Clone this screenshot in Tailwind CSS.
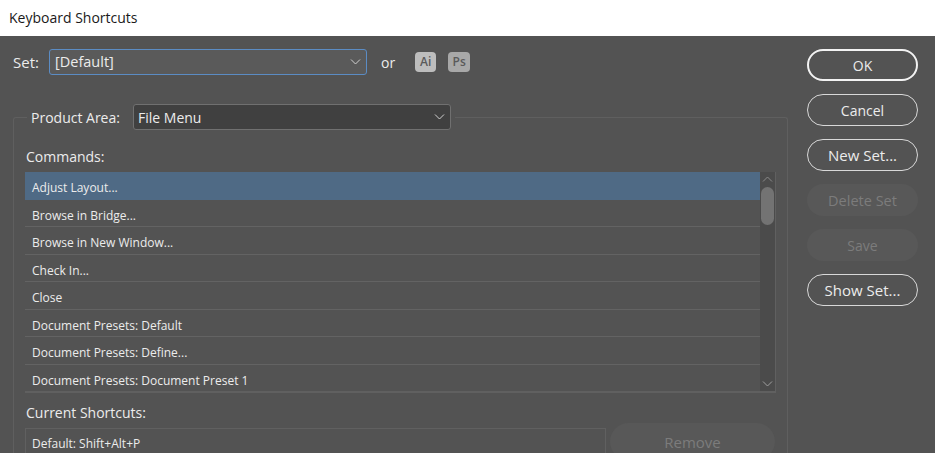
<!DOCTYPE html>
<html lang="en">
<head>
    <meta charset="UTF-8">
    <title>Keyboard Shortcuts</title>
    <script src="https://cdn.jsdelivr.net/npm/@tailwindcss/browser@4"></script>
</head>
<body class="h-[453px] overflow-hidden bg-[#535353] font-['Open_Sans',sans-serif] text-[#ececec]">
    <!-- Title bar -->
    <div class="h-9 bg-white pl-[9px] pt-[8px] text-[14px] leading-[19px] text-[#1a1a1a]">Keyboard Shortcuts</div>

    <div class="flex">
        <!-- Left column -->
        <div class="w-[807px] shrink-0 pl-[13px]">
            <!-- Set row -->
            <div class="mt-[13px] flex h-[26px] items-center text-[14px]">
                <span class="w-9 text-[15px]">Set:</span>
                <div class="flex h-[26px] w-[318px] items-center justify-between rounded-[3px] border border-[#5b8cc4] bg-[#5a5a5a] pl-[5px] pr-[5px]">
                    <span class="text-[14.5px]">[Default]</span>
                    <svg class="h-[6px] w-[11px]" viewBox="0 0 11 6" fill="none" stroke="#d0d0d0" stroke-width="1"><path d="M1 .5l4.5 4.5L10 .5"/></svg>
                </div>
                <span class="ml-[14px]">or</span>
                <div class="ml-[20px] flex h-[20px] w-[21px] items-center justify-center rounded-[4px] bg-[#bdbdbd] text-[12px] font-semibold text-[#5a5a5a]">Ai</div>
                <div class="ml-[12px] flex h-[20px] w-[22px] items-center justify-center rounded-[4px] bg-[#a8a8a8] text-[12px] font-semibold text-[#5a5a5a]">Ps</div>
            </div>

            <!-- Product area group -->
            <fieldset class="mt-[29px] h-[349px] w-[775px] overflow-hidden rounded-t-[3px] border border-b-0 border-[#5f5f5f] pl-[11px] pr-[10px]">
                <legend class="ml-[2px] flex items-center px-[4px] text-[14px]">
                    <span class="w-[102px]">Product Area:</span>
                    <div class="flex h-[26px] w-[318px] items-center justify-between rounded-[3px] border border-[#707070] bg-[#404040] pl-[4px] pr-[5px]">
                        <span>File Menu</span>
                        <svg class="h-[6px] w-[11px]" viewBox="0 0 11 6" fill="none" stroke="#d0d0d0" stroke-width="1"><path d="M1 .5l4.5 4.5L10 .5"/></svg>
                    </div>
                </legend>

                <div class="ml-[1px] mt-[17px] text-[14px] leading-[19px]">Commands:</div>

                <!-- Commands list -->
                <div class="mt-[6px] flex h-[221px] w-[751px] border-b-2 border-r border-[#606060] text-[12px]">
                    <div class="flex-1">
                        <div class="flex h-[27.5px] items-center bg-[#4f6a85] pl-[7px] pt-[4px]">Adjust Layout...</div>
                        <div class="flex h-[27.5px] items-center border-b border-[#636363] pl-[7px] pt-[6px]">Browse in Bridge...</div>
                        <div class="flex h-[27.5px] items-center border-b border-[#636363] pl-[7px] pt-[6px]">Browse in New Window...</div>
                        <div class="flex h-[27.5px] items-center border-b border-[#636363] pl-[7px] pt-[6px]">Check In...</div>
                        <div class="flex h-[27.5px] items-center border-b border-[#636363] pl-[7px] pt-[6px]">Close</div>
                        <div class="flex h-[27.5px] items-center border-b border-[#636363] pl-[7px] pt-[6px]">Document Presets: Default</div>
                        <div class="flex h-[27.5px] items-center border-b border-[#636363] pl-[7px] pt-[6px]">Document Presets: Define...</div>
                        <div class="flex h-[27.5px] items-center pl-[7px] pt-[6px]">Document Presets: Document Preset 1</div>
                    </div>
                    <!-- Scrollbar -->
                    <div class="flex w-[15px] flex-col items-center bg-[#4b4b4b]">
                        <svg class="mt-[4px] h-[6px] w-[11px]" viewBox="0 0 11 6" fill="none" stroke="#8a8a8a" stroke-width="1"><path d="M1 5.5L5.5 1 10 5.5"/></svg>
                        <div class="mt-[5px] h-[38px] w-[13px] rounded-full bg-[#737373]"></div>
                        <svg class="mt-auto mb-[4px] h-[6px] w-[11px]" viewBox="0 0 11 6" fill="none" stroke="#a0a0a0" stroke-width="1"><path d="M1 .5l4.5 4.5L10 .5"/></svg>
                    </div>
                </div>

                <div class="ml-[1px] mt-[10px] text-[14px] leading-[19px]">Current Shortcuts:</div>

                <div class="mt-[1px] flex">
                    <div class="mt-[5px] h-[40px] w-[581px] border border-[#606060] pl-[6px] pt-[6px] text-[12px] leading-[17px]">Default: Shift+Alt+P</div>
                    <div class="ml-[4px] flex h-[37px] w-[165px] justify-center rounded-full bg-[#585858] pt-[10px] text-[15px] leading-[19px] text-[#7c7c7c]">Remove</div>
                </div>
            </fieldset>
        </div>

        <!-- Buttons -->
        <div class="mt-[13px] flex w-[111px] flex-col gap-[13px] text-[14px]">
            <button class="h-[32px] rounded-full border-2 border-[#f2f2f2]">OK</button>
            <button class="h-[32px] rounded-full border border-[#d8d8d8]">Cancel</button>
            <button class="h-[32px] rounded-full border border-[#d8d8d8] text-[15px]">New Set...</button>
            <button class="h-[32px] rounded-full bg-[#585858] pt-[1px] text-[14.5px] text-[#7c7c7c]">Delete Set</button>
            <button class="h-[32px] rounded-full bg-[#585858] text-[#7c7c7c]">Save</button>
            <button class="h-[32px] rounded-full border border-[#d8d8d8] text-[15px]">Show Set...</button>
        </div>
    </div>
</body>
</html>
